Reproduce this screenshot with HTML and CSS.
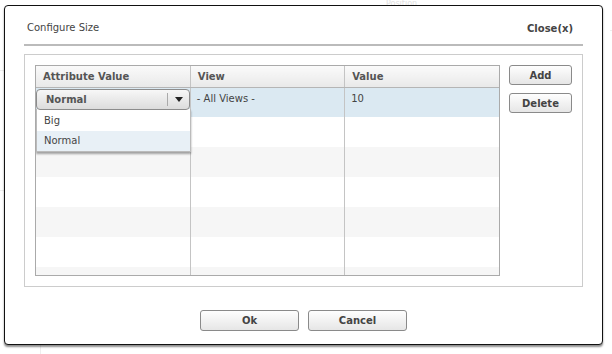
FILE: index.html
```html
<!DOCTYPE html>
<html lang="en">

<head>
    <meta charset="UTF-8">
    <meta name="viewport" content="width=device-width, initial-scale=1.0">
    <title>Configure Size</title>
    <link rel="stylesheet" href="styles.css">
</head>

<body>
    <div class="backdrop">
        <span class="bg-label">Position</span>
        <div class="dialog">
            <header class="dialog-head">
                <h1 class="dialog-title">Configure Size</h1>
                <a class="dialog-close" href="#">Close(x)</a>
            </header>

            <section class="panel">
                <div class="grid-wrap">
                    <table class="grid">
                        <thead>
                            <tr>
                                <th>Attribute Value</th>
                                <th>View</th>
                                <th>Value</th>
                            </tr>
                        </thead>
                        <tbody>
                            <tr class="selected">
                                <td class="edit-cell">
                                    <div class="combo">
                                        <span class="combo-text">Normal</span>
                                        <span class="combo-arrow"></span>
                                    </div>
                                    <ul class="combo-list">
                                        <li>Big</li>
                                        <li class="hover">Normal</li>
                                    </ul>
                                </td>
                                <td>- All Views -</td>
                                <td>10</td>
                            </tr>
                            <tr><td></td><td></td><td></td></tr>
                            <tr><td></td><td></td><td></td></tr>
                            <tr><td></td><td></td><td></td></tr>
                            <tr><td></td><td></td><td></td></tr>
                            <tr><td></td><td></td><td></td></tr>
                            <tr><td></td><td></td><td></td></tr>
                        </tbody>
                    </table>
                </div>
                <div class="side-buttons">
                    <button class="btn small">Add</button>
                    <button class="btn small">Delete</button>
                </div>
            </section>

            <footer class="dialog-foot">
                <button class="btn wide">Ok</button>
                <button class="btn wide">Cancel</button>
            </footer>
        </div>
    </div>
</body>

</html>
```

FILE: styles.css
```css
* {
    box-sizing: border-box;
}

body {
    margin: 0;
    padding: 0;
    background: #fff;
    font-family: "DejaVu Sans", Verdana, sans-serif;
    font-size: 10px;
    color: #444;
}

.backdrop {
    position: relative;
    width: 612px;
    height: 354px;
    padding: 5px 0 0 4px;
    background:
        linear-gradient(#eee, #eee) 40px 345px / 1px 9px no-repeat,
        linear-gradient(#eee, #eee) 0 70px / 4px 1px no-repeat,
        linear-gradient(#eee, #eee) 0 190px / 4px 1px no-repeat,
        linear-gradient(#eee, #eee) 610px 30px / 2px 1px no-repeat;
}

/* faint text of the page behind the dialog */
.bg-label {
    position: absolute;
    left: 386px;
    top: 0;
    color: #e2e2e2;
    font-size: 8px;
    line-height: 8px;
}

.dialog {
    position: relative;
    width: 599px;
    height: 340px;
    background: #fff;
    border: 1.5px solid #111;
    border-radius: 4px;
    box-shadow: 0 2px 2px rgba(0, 0, 0, 0.45);
    display: flex;
    flex-direction: column;
}

.dialog-head {
    display: flex;
    justify-content: space-between;
    align-items: center;
    margin: 0 19px 0 19px;
    height: 40px;
    padding: 4px 10px 0 3px;
    border-bottom: 2px solid #bbb;
}

.dialog-title {
    margin: 0;
    font-size: 10px;
    font-weight: normal;
    color: #444;
}

.dialog-close {
    color: #444;
    font-weight: bold;
    text-decoration: none;
    margin-top: 3px;
}

.panel {
    display: flex;
    gap: 9px;
    margin: 8px 19px 0 19px;
    height: 233px;
    padding: 10px 10px 10px 10px;
    border: 1px solid #ccc;
}

.grid-wrap {
    width: 465px;
    height: 211px;
    overflow: hidden;
    border: 1px solid #aaa;
}

.grid {
    width: 100%;
    border-collapse: collapse;
    table-layout: fixed;
}

.grid th {
    height: 21px;
    text-align: left;
    padding: 1px 7px 0;
    font-weight: bold;
    color: #555;
    background: linear-gradient(#fafafa, #e9e9e9);
    border-bottom: 1px solid #b5b5b5;
    border-left: 1px solid #c4c4c4;
}

.grid td {
    height: 30px;
    padding: 0 6px;
    vertical-align: top;
    padding-top: 5px;
    border-left: 1px solid #c4c4c4;
}

.grid th:first-child,
.grid td:first-child {
    border-left: none;
}

.grid tbody tr:nth-child(odd) {
    background: #f6f6f6;
}

.grid tbody tr.selected {
    background: #dbe9f2;
}

.edit-cell {
    position: relative;
}

.grid td.edit-cell {
    padding: 0;
}

.combo {
    position: absolute;
    left: 0;
    top: 1px;
    width: 154px;
    height: 21px;
    display: flex;
    align-items: center;
    padding-left: 9px;
    border: 1px solid #8c8c8c;
    border-radius: 4px;
    background: linear-gradient(#f7f7f7, #dcdcdc);
    font-weight: bold;
    color: #555;
    z-index: 2;
}

.combo-text {
    flex: 1;
}

.combo-arrow {
    width: 22px;
    height: 13px;
    border-left: 1px solid #aaa;
    position: relative;
}

.combo-arrow::after {
    content: "";
    position: absolute;
    left: 7px;
    top: 4px;
    border-left: 4px solid transparent;
    border-right: 4px solid transparent;
    border-top: 5px solid #222;
}

.combo-list {
    position: absolute;
    left: 0;
    top: 21px;
    width: 155px;
    margin: 0;
    padding: 2px 0 0;
    list-style: none;
    background: #fff;
    border: 1px solid #bbb;
    border-top: none;
    box-shadow: 0 2px 2px rgba(0, 0, 0, 0.35);
    z-index: 1;
}

.combo-list li {
    height: 20px;
    line-height: 20px;
    padding-left: 7px;
    color: #444;
}

.combo-list li.hover {
    background: #e8f0f6;
}

.side-buttons {
    display: flex;
    flex-direction: column;
    gap: 8px;
}

.btn {
    font-family: "DejaVu Sans", Verdana, sans-serif;
    font-size: 10px;
    font-weight: bold;
    color: #444;
    border: 1px solid #8a8a8a;
    border-radius: 3px;
    background: linear-gradient(#fefefe, #e6e6e6);
    padding: 0;
}

.btn.small {
    width: 63px;
    height: 20px;
}

.dialog-foot {
    display: flex;
    justify-content: center;
    gap: 9px;
    margin-top: 23px;
}

.btn.wide {
    width: 99px;
    height: 21px;
}
```
